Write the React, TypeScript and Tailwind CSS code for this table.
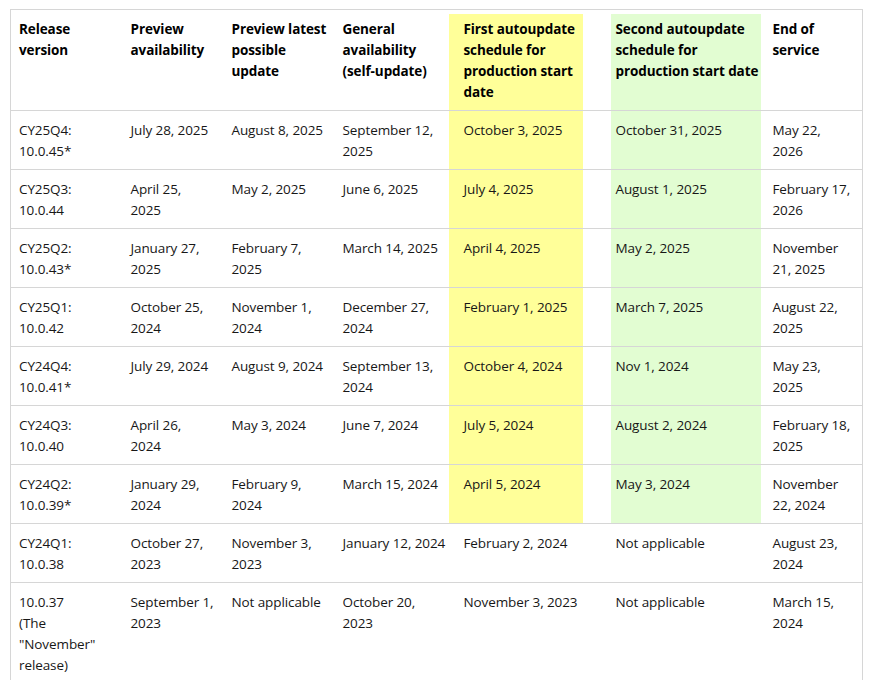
const rows: string[][] = [
  ['CY25Q4: 10.0.45*', 'July 28, 2025', 'August 8, 2025', 'September 12, 2025', 'October 3, 2025', 'October 31, 2025', 'May 22, 2026'],
  ['CY25Q3: 10.0.44', 'April 25, 2025', 'May 2, 2025', 'June 6, 2025', 'July 4, 2025', 'August 1, 2025', 'February 17, 2026'],
  ['CY25Q2: 10.0.43*', 'January 27, 2025', 'February 7, 2025', 'March 14, 2025', 'April 4, 2025', 'May 2, 2025', 'November 21, 2025'],
  ['CY25Q1: 10.0.42', 'October 25, 2024', 'November 1, 2024', 'December 27, 2024', 'February 1, 2025', 'March 7, 2025', 'August 22, 2025'],
  ['CY24Q4: 10.0.41*', 'July 29, 2024', 'August 9, 2024', 'September 13, 2024', 'October 4, 2024', 'Nov 1, 2024', 'May 23, 2025'],
  ['CY24Q3: 10.0.40', 'April 26, 2024', 'May 3, 2024', 'June 7, 2024', 'July 5, 2024', 'August 2, 2024', 'February 18, 2025'],
  ['CY24Q2: 10.0.39*', 'January 29, 2024', 'February 9, 2024', 'March 15, 2024', 'April 5, 2024', 'May 3, 2024', 'November 22, 2024'],
  ['CY24Q1: 10.0.38', 'October 27, 2023', 'November 3, 2023', 'January 12, 2024', 'February 2, 2024', 'Not applicable', 'August 23, 2024'],
  ['10.0.37 (The "November" release)', 'September 1, 2023', 'Not applicable', 'October 20, 2023', 'November 3, 2023', 'Not applicable', 'March 15, 2024'],
];

// rows that carry the yellow / green highlight
const highlighted = 7;

export default function App() {
  return (
    <div
      className="min-h-screen bg-white pl-[10px] pt-[9px] text-[13.5px] leading-[21px] tracking-[-0.1px] text-[#171717]"
      style={{ fontFamily: '"Open Sans", "Noto Sans", sans-serif' }}
    >
      <table className="w-[852px] table-fixed border-collapse border border-[#d6d6d6]">
        <colgroup>
          <col className="w-[110px]" />
          <col className="w-[101px]" />
          <col className="w-[111px]" />
          <col className="w-[116px]" />
          <col className="w-[134px]" />
          <col className="w-[28px]" />
          <col className="w-[150px]" />
          <col className="w-[102px]" />
        </colgroup>
        <thead>
          <tr className="border-b border-[#d6d6d6] align-top text-left font-bold text-black [&>th]:pt-[9px] [&>th]:pb-[7px]">
            <th className="pl-2 pr-[27px]">Release version</th>
            <th className="pl-[10px] pr-[7px]">Preview availability</th>
            <th className="pl-[10px] pr-[6px]">Preview latest possible update</th>
            <th className="pl-[10px] pr-0">General availability (self-update)</th>
            <th className="bg-[#ffff99] pl-[15px] pr-[4px] shadow-[inset_0_4px_0_white]">
              First autoupdate schedule for production start date
            </th>
            <th />
            <th className="bg-[#e2fdd2] pl-[5px] pr-[2px] shadow-[inset_0_4px_0_white]">
              Second autoupdate schedule for production start date
            </th>
            <th className="pl-[12px] pr-[9px]">End of service</th>
          </tr>
        </thead>
        <tbody>
          {rows.map((r, i) => {
            const hl = i < highlighted;
            return (
              <tr key={i} className="border-b border-[#d6d6d6] align-top [&>td]:pt-[9px] [&>td]:pb-[7px]">
                <td className="pl-2 pr-[27px]">{r[0]}</td>
                <td className="pl-[10px] pr-[7px]">{r[1]}</td>
                <td className="pl-[10px] pr-[6px]">{r[2]}</td>
                <td className="pl-[10px] pr-0">{r[3]}</td>
                <td className={hl ? 'bg-[#ffff99] pl-[15px] pr-[4px]' : 'pl-[15px] pr-[4px]'}>{r[4]}</td>
                <td />
                <td className={hl ? 'bg-[#e2fdd2] pl-[5px] pr-[2px]' : 'pl-[5px] pr-[2px]'}>{r[5]}</td>
                <td className="pl-[12px] pr-[9px]">{r[6]}</td>
              </tr>
            );
          })}
        </tbody>
      </table>
    </div>
  );
}
